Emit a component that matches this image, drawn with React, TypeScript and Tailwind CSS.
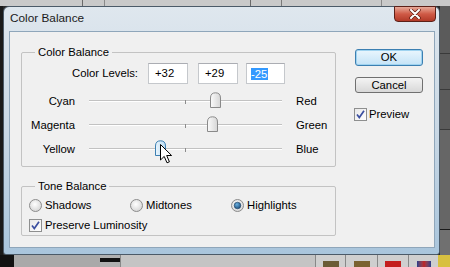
import React from "react";

const font = { fontFamily: '"Liberation Sans", Arial, sans-serif' };

function Thumb({ hover }: { hover?: boolean }) {
  return (
    <svg width="11" height="16" viewBox="0 0 11 16">
      <defs>
        <linearGradient id={hover ? "tgh" : "tg"} x1="0" y1="0" x2="1" y2="0">
          <stop offset="0" stopColor={hover ? "#eaf5fd" : "#fbfbfb"} />
          <stop offset="1" stopColor={hover ? "#bcdcf2" : "#d6d6d6"} />
        </linearGradient>
      </defs>
      <path
        d="M0.5 15.5 V6 Q0.5 0.8 5.5 0.8 Q10.5 0.8 10.5 6 V15.5 Z"
        fill={`url(#${hover ? "tgh" : "tg"})`}
        stroke={hover ? "#3c7fb1" : "#8a8a8a"}
        strokeWidth="1"
      />
    </svg>
  );
}

function Slider({
  left,
  right,
  value,
  hover,
}: {
  left: string;
  right: string;
  value: number;
  hover?: boolean;
}) {
  const w = 193;
  const center = (w - 1) / 2;
  const pos = center + (value / 100) * (w / 2) - 5.5;
  return (
    <div className="flex h-[24px] items-center">
      <div className="w-[53px] text-right">{left}</div>
      <div className="relative ml-[14px] h-[24px] w-[193px]">
        <div className="absolute left-0 right-0 top-[11px] h-[2px] border-b border-white bg-[#c2c2c2]" />
        <div className="absolute left-[96px] top-[11px] h-[4px] w-[1px] bg-[#8c8c8c]" />
        <div className="absolute top-[3px]" style={{ left: pos }}>
          <Thumb hover={hover} />
        </div>
      </div>
      <div className="ml-[14px]">{right}</div>
    </div>
  );
}

function Radio({ checked }: { checked?: boolean }) {
  return (
    <svg width="13" height="13" viewBox="0 0 13 13">
      <defs>
        <radialGradient id="rg" cx="0.45" cy="0.4" r="0.7">
          <stop offset="0" stopColor="#ffffff" />
          <stop offset="1" stopColor="#cfcfcf" />
        </radialGradient>
        <radialGradient id="rd" cx="0.4" cy="0.35" r="0.7">
          <stop offset="0" stopColor="#6ab0e0" />
          <stop offset="1" stopColor="#1a4a78" />
        </radialGradient>
      </defs>
      <circle cx="6.5" cy="6.5" r="6" fill="url(#rg)" stroke="#8c8c8c" />
      {checked && <circle cx="6.5" cy="6.5" r="3.3" fill="url(#rd)" stroke="#1d3f62" strokeWidth="0.6" />}
    </svg>
  );
}

function Check() {
  return (
    <svg width="13" height="13" viewBox="0 0 13 13">
      <defs>
        <linearGradient id="cg" x1="0" y1="0" x2="1" y2="1">
          <stop offset="0" stopColor="#e8e8e8" />
          <stop offset="1" stopColor="#ffffff" />
        </linearGradient>
      </defs>
      <rect x="0.5" y="0.5" width="12" height="12" fill="url(#cg)" stroke="#8e8f8f" />
      <path d="M3 6.5 L5.3 9.5 L10 2.8" fill="none" stroke="#3b4fa0" strokeWidth="1.7" />
    </svg>
  );
}

function Cursor() {
  return (
    <svg width="13" height="20" viewBox="0 0 13 20">
      <path
        d="M0.5 0.5 L0.5 16 L4.2 12.4 L7 18.8 L9.4 17.8 L6.7 11.5 L11.6 11.5 Z"
        fill="#ffffff"
        stroke="#000000"
        strokeWidth="1"
        strokeLinejoin="round"
      />
    </svg>
  );
}

export default function App() {
  return (
    <div className="relative h-[267px] w-[450px] overflow-hidden bg-[#2a2a2a] text-[11.3px] text-black" style={font}>
      {/* background desktop / app */}
      <div className="flex h-[6px] bg-[#c9c9c9]">
        <div className="w-[83px] border-r border-[#6a6a6a]" />
        <div className="w-[22px] border-r border-[#8a8a8a]" />
        <div className="w-[146px] border-r border-[#6a6a6a]" />
        <div className="w-[31px] border-r border-[#7a7a7a]" />
        <div className="w-[100px] border-r border-[#8a8a8a]" />
        <div className="flex-1" />
      </div>
      <div className="flex h-[249px]">
        <div className="w-[3px] bg-[#1a1a1a]" />
        <div className="w-[437px]" />
        <div className="flex w-[10px] flex-col bg-[#5b5b5b]">
          <div className="h-[48px] border-b border-[#3a3a3a]" />
          <div className="h-[36px] border-b border-[#3a3a3a]" />
          <div className="h-[40px] border-b border-[#3a3a3a]" />
          <div className="h-[100px] border-b border-[#1a1a1a] bg-[#666]" />
          <div className="flex-1 bg-[#707070]" />
        </div>
      </div>
      <div className="flex h-[12px] bg-[#b9b9b9]">
        <div className="w-[14px] bg-[#111]" />
        <div className="w-[86px] bg-[#a9a9a9]" />
        <div className="flex w-[20px] items-start bg-[#b0b0b0] pt-[3px]">
          <div className="h-[4px] w-[20px] bg-[#111]" />
        </div>
        <div className="w-[195px] border-l border-[#888] bg-[#c4c4c4]" />
        <div className="flex w-[30px] items-end justify-center border-l border-[#888] bg-[#cfcfcf]">
          <div className="h-[6px] w-[16px] bg-[#6b5c36]" />
        </div>
        <div className="flex w-[32px] items-end justify-center border-l border-[#888] bg-[#cfcfcf]">
          <div className="h-[6px] w-[16px] bg-[#7a6230]" />
        </div>
        <div className="flex w-[31px] items-end justify-center border-l border-[#888] bg-[#cfcfcf]">
          <div className="h-[6px] w-[16px] bg-[#c41e1e]" />
        </div>
        <div className="flex w-[30px] items-end justify-center border-l border-[#888] bg-[#cfcfcf]">
          <div className="h-[6px] w-[14px] bg-gradient-to-r from-[#2a3a8a] via-[#c02020] to-[#2a3a8a]" />
        </div>
        <div className="flex-1 bg-[#d8c040]" />
      </div>

      {/* window */}
      <div className="absolute left-[3px] top-[6px] flex h-[249px] w-[437px] flex-col rounded-t-[6px] rounded-b-[3px] border border-[#4b5a68] bg-gradient-to-b from-[#dfe7ee] via-[#c9d8e5] to-[#a9c5dc]">
        <div className="relative flex h-[24px] items-center pl-[6px] text-[11.8px] text-[#1a1a1a]">
          Color Balance
          <div className="absolute right-[3px] top-[-1px] flex h-[16px] w-[42px] items-center justify-center rounded-b-[4px] border border-[#5c2018] bg-gradient-to-b from-[#e6a898] via-[#cf5a46] to-[#b23a28]">
            <svg width="12" height="10" viewBox="0 0 12 10">
              <path d="M2 1 L10 9 M10 1 L2 9" stroke="#5a1a12" strokeWidth="3.4" strokeLinecap="round" />
              <path d="M2 1 L10 9 M10 1 L2 9" stroke="#ffffff" strokeWidth="2" strokeLinecap="round" />
            </svg>
          </div>
        </div>
        <div className="mb-[6px] ml-[5px] mr-[4px] flex h-[217px] border border-[#8fa6ba] bg-[#f0f0f0]">
          {/* left column */}
          <div className="ml-[11px] flex flex-col">
            <div className="relative mt-[20px] h-[115px] w-[315px] rounded-[2px] border border-[#c3c3c3]">
              <span className="absolute left-[13px] top-[-8px] bg-[#f0f0f0] px-[3px] leading-[14px]">Color Balance</span>
              <div className="mt-[10px] flex h-[21px] items-center">
                <div className="w-[116px] text-right">Color Levels:</div>
                <div className="ml-[10px] flex h-[21px] w-[40px] items-center border border-[#c5c8cc] border-t-[#abadb3] bg-white pl-[6px]">+32</div>
                <div className="ml-[10px] flex h-[21px] w-[40px] items-center border border-[#c5c8cc] border-t-[#abadb3] bg-white pl-[6px]">+29</div>
                <div className="ml-[8px] flex h-[21px] w-[39px] items-center border border-[#c5c8cc] border-t-[#abadb3] bg-white pl-[4px]">
                  <span className="bg-[#3399ff] pr-[1px] leading-[12px] text-white">-25</span>
                </div>
              </div>
              <div className="mt-[5px] flex flex-col">
                <Slider left="Cyan" right="Red" value={32} />
                <Slider left="Magenta" right="Green" value={29} />
                <Slider left="Yellow" right="Blue" value={-25} hover />
              </div>
            </div>
            <div className="relative mt-[19px] h-[50px] w-[315px] rounded-[2px] border border-[#c3c3c3]">
              <span className="absolute left-[13px] top-[-8px] bg-[#f0f0f0] px-[3px] leading-[14px]">Tone Balance</span>
              <div className="ml-[7px] mt-[10px] flex h-[16px] items-center">
                <div className="flex w-[101px] items-center gap-[3px]">
                  <Radio />
                  <span>Shadows</span>
                </div>
                <div className="flex w-[101px] items-center gap-[3px]">
                  <Radio />
                  <span>Midtones</span>
                </div>
                <div className="flex items-center gap-[3px]">
                  <Radio checked />
                  <span>Highlights</span>
                </div>
              </div>
              <div className="ml-[7px] mt-[4px] flex h-[16px] items-center gap-[3px]">
                <Check />
                <span>Preserve Luminosity</span>
              </div>
            </div>
          </div>
          {/* right column */}
          <div className="ml-[19px] mt-[17px] flex w-[68px] flex-col">
            <div className="flex h-[17px] items-center justify-center rounded-[3px] border border-[#3c7fb1] bg-gradient-to-b from-[#eaf6fd] to-[#c4e3f7] shadow-[inset_0_0_0_1px_#9fd3f0]">OK</div>
            <div className="mt-[11px] flex h-[16px] items-center justify-center rounded-[3px] border border-[#707070] bg-gradient-to-b from-[#f4f4f4] to-[#d8d8d8]">Cancel</div>
            <div className="ml-[-1px] mt-[15px] flex h-[13px] items-center gap-[2px]">
              <Check />
              <span>Preview</span>
            </div>
          </div>
        </div>
      </div>

      {/* mouse cursor */}
      <div className="absolute left-[160px] top-[144px]">
        <Cursor />
      </div>
    </div>
  );
}
